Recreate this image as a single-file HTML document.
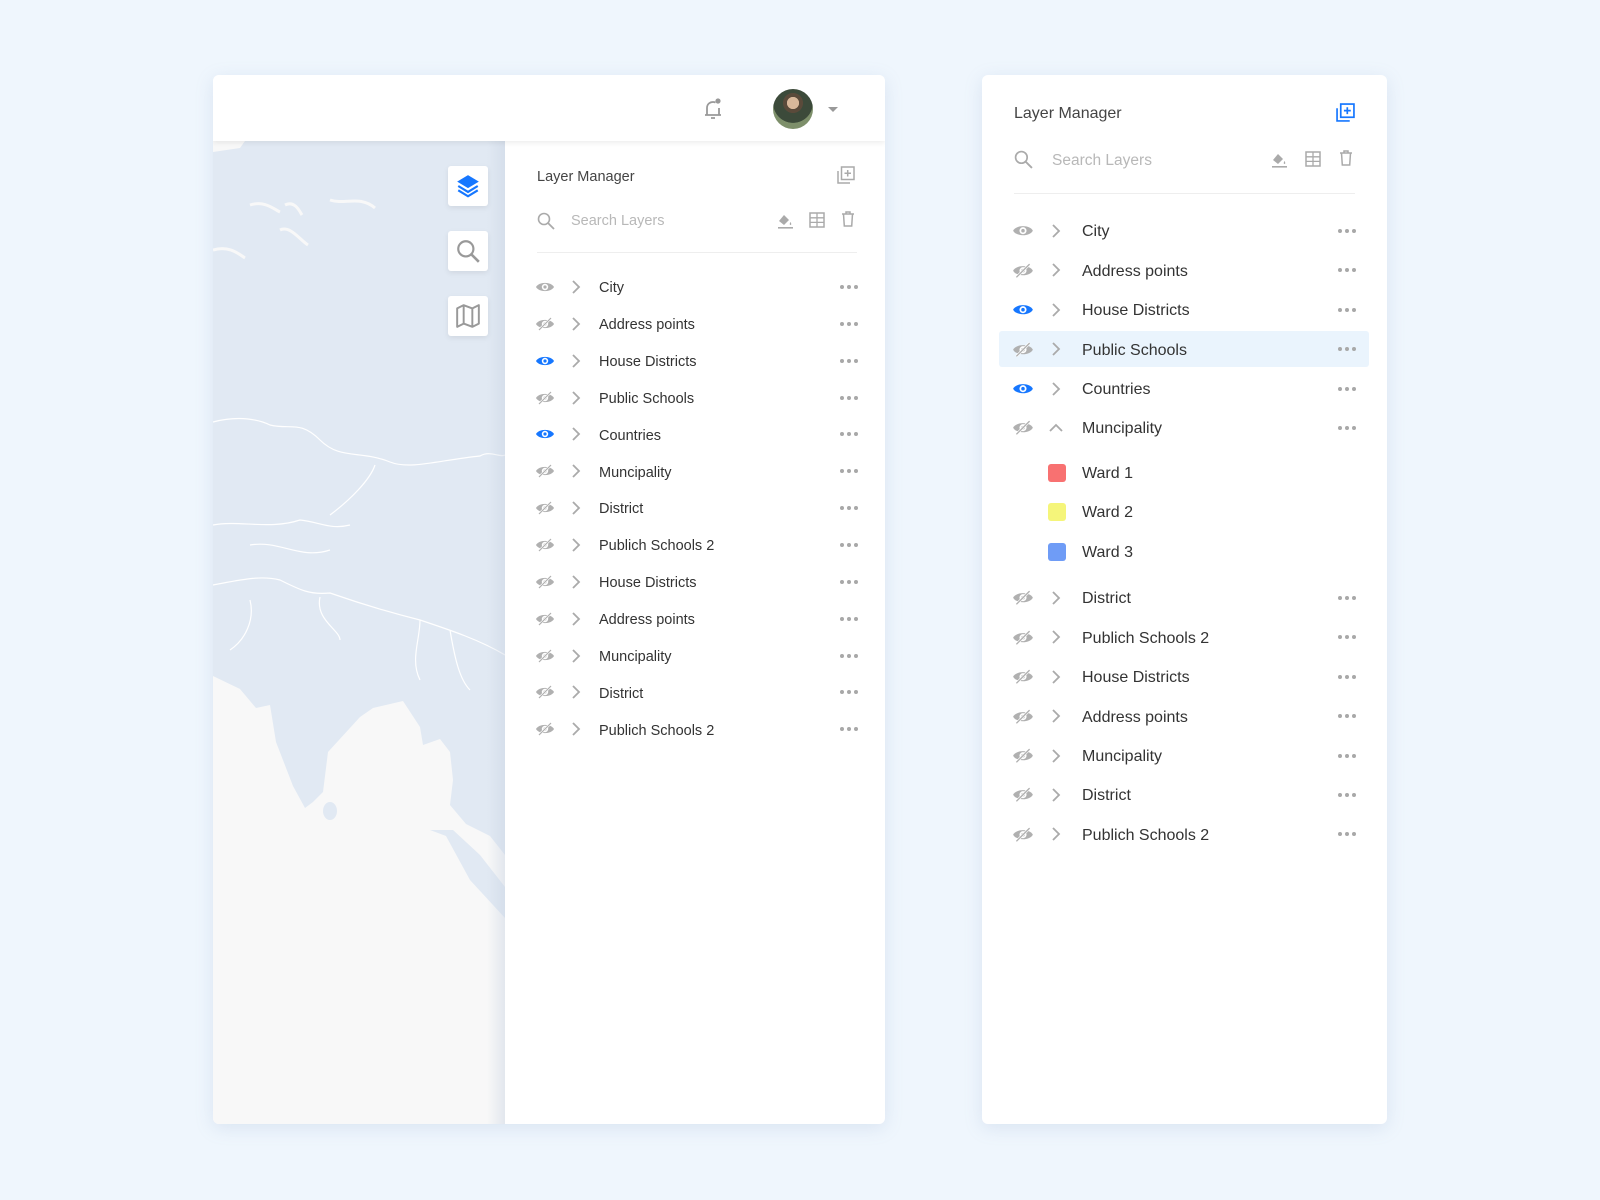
<!DOCTYPE html>
<html><head><meta charset="utf-8"><style>
*{margin:0;padding:0;box-sizing:border-box}
body{width:1600px;height:1200px;background:#eff6fd;font-family:"Liberation Sans",sans-serif;position:relative;overflow:hidden;color:#333}
.card{position:absolute;background:#fff;border-radius:6px;box-shadow:0 4px 18px rgba(120,150,190,.18);overflow:hidden}
.abs{position:absolute}
.t{position:absolute;white-space:nowrap}
.dots{position:absolute;display:flex;gap:3px}
.dots i{width:4px;height:4px;border-radius:50%;background:#a8a8a8;display:block}
.tb{position:absolute;width:40px;height:40px;background:#fff;border-radius:3px;box-shadow:0 2px 6px rgba(0,0,0,.08);display:flex;align-items:center;justify-content:center}
</style></head><body>
<svg width="0" height="0" style="position:absolute"><defs>
<symbol id="eye" viewBox="0 0 20 14"><path d="M1 7C4 1.5 16 1.5 19 7C16 12.5 4 12.5 1 7Z" fill="currentColor"/><circle cx="10" cy="7" r="3.2" fill="#fff"/><circle cx="10" cy="7" r="1.6" fill="currentColor"/></symbol>
<symbol id="eyex" viewBox="0 0 20 14"><path d="M1 7C4 1.5 16 1.5 19 7C16 12.5 4 12.5 1 7Z" fill="currentColor"/><circle cx="10" cy="7" r="3.2" fill="#fff"/><circle cx="10" cy="7" r="1.6" fill="currentColor"/><path d="M4 13L16 1" stroke="#fff" stroke-width="2.4"/><path d="M4 13L16 1" stroke="currentColor" stroke-width="1.2"/></symbol>
<symbol id="chev" viewBox="0 0 10 16"><path d="M2 2L8 8L2 14" fill="none" stroke="#aaa" stroke-width="1.8"/></symbol>
</defs></svg>

<!-- LEFT CARD -->
<div class="card" style="left:213px;top:75px;width:672px;height:1049px">
 <div class="abs" style="left:0;top:66px;width:292px;height:983px;background:#f8f8f8">
  <svg width="292" height="983" viewBox="213 141 292 983" style="position:absolute;left:0;top:0">
   <polygon fill="#e1e9f3" points="213,141 505,141 505,855 490,836 466,824 450,805 453,780 450,752 440,739 423,745 420,727 403,701 373,708 360,717 328,752 323,792 313,802 305,808 293,786 276,742 270,705 256,708 240,689 213,676"/>
   <ellipse cx="330" cy="811" rx="7" ry="9" fill="#e1e9f3"/>
   <polygon fill="#e1e9f3" points="430,830 446,836 470,880 505,918 505,887 480,855 453,830"/>
   <polygon fill="#f8f8f8" points="213,141 245,141 240,148 213,152"/>
   <path d="M213 250 C230 245 240 255 245 258 M250 205 C265 200 275 210 280 212 M280 230 C290 225 300 240 308 245 M285 205 C295 200 300 212 302 215 M330 200 C345 205 360 195 375 208" fill="none" stroke="#f8f8f8" stroke-width="3"/>
   <path d="M213 422 C240 415 260 420 270 425 C290 430 300 420 320 440 C340 460 360 450 390 462 C410 470 440 460 480 456 C490 450 500 458 505 455 M375 465 C370 480 350 500 330 515 M213 525 C240 520 270 530 300 520 C320 522 330 530 350 525 M250 545 C280 540 300 560 330 550 M213 585 C240 580 260 575 280 580 C300 590 310 595 330 593 C350 600 380 610 420 620 C450 630 480 640 505 655 M250 600 C255 620 245 640 230 650 M320 597 C315 620 340 630 340 640 M420 620 C420 640 410 660 420 680 M450 630 C455 660 460 680 470 690" fill="none" stroke="#fff" stroke-width="1.2"/>
  </svg>
  <div class="abs" style="right:0;top:0;width:18px;height:983px;background:linear-gradient(90deg,rgba(200,210,225,0),rgba(200,210,225,.45))"></div>
  <div class="tb" style="left:235px;top:25px"><svg width="26" height="26" viewBox="0 0 24 24"><path d="M12 2L22 8L12 14L2 8Z" fill="#1677ff"/><path d="M3 12L12 17.5L21 12M3 16L12 21.5L21 16" fill="none" stroke="#1677ff" stroke-width="2"/></svg></div>
  <div class="tb" style="left:235px;top:90px"><svg width="26" height="26" viewBox="0 0 24 24"><circle cx="10" cy="10" r="7" fill="none" stroke="#999" stroke-width="2"/><path d="M15 15L22 22" stroke="#999" stroke-width="2.4"/></svg></div>
  <div class="tb" style="left:235px;top:155px"><svg width="26" height="26" viewBox="0 0 24 24"><path d="M2 5L8 2L16 5L22 2V19L16 22L8 19L2 22Z M8 2V19 M16 5V22" fill="none" stroke="#999" stroke-width="1.8" stroke-linejoin="round"/></svg></div>
 </div>
 <div class="abs" style="left:0;top:0;width:672px;height:66px;background:#fff;box-shadow:0 2px 5px rgba(0,0,0,.07)"></div>
 <svg class="abs" style="left:490px;top:22px" width="22" height="24" viewBox="0 0 22 24"><path d="M4 18V11C4 7 7 5 10 5C11 5 12 5.3 12.5 5.6M16 11V18M2 18H18M8 21H12" fill="none" stroke="#999" stroke-width="1.8"/><circle cx="15" cy="4" r="2.6" fill="#999"/></svg>
 <div class="abs" style="left:560px;top:14px;width:40px;height:40px;border-radius:50%;background:radial-gradient(circle at 50% 35%,#d9b89a 0 18%,#5a4a3a 19% 30%,#3c4a3a 31% 60%,#7d8f6a 61%)"></div>
 <div class="abs" style="left:615px;top:32px;width:0;height:0;border-left:5px solid transparent;border-right:5px solid transparent;border-top:5px solid #999"></div>

 <div class="t" style="left:324px;top:94px;font-size:14.5px;color:#444">Layer Manager</div>
 <svg class="abs" style="left:624px;top:91px" width="18" height="18" viewBox="0 0 18 18"><path d="M1 5V17H13" fill="none" stroke="#aaa" stroke-width="1.5"/><rect x="4.5" y="1" width="12.5" height="12.5" fill="none" stroke="#aaa" stroke-width="1.5"/><path d="M10.7 4V10.5M7.5 7.2H14" stroke="#aaa" stroke-width="1.5"/></svg>
 <svg class="abs" style="left:324px;top:137px" width="18" height="18" viewBox="0 0 18 18"><circle cx="7" cy="7" r="5.5" fill="none" stroke="#aaa" stroke-width="1.6"/><path d="M11 11L17 17" stroke="#aaa" stroke-width="1.8"/></svg>
 <div class="t" style="left:358px;top:138px;font-size:14.5px;color:#b8b8b8">Search Layers</div>
 <svg class="abs" style="left:564px;top:137px" width="17" height="17" viewBox="0 0 17 17"><path d="M2 9L7 3L12 8L7 13Z" fill="#aaa"/><path d="M13.5 10C12.5 11.5 12.5 13 13.5 13S14.5 11.5 13.5 10Z" fill="#aaa"/><rect x="1" y="15" width="15" height="1.6" fill="#aaa"/></svg>
 <svg class="abs" style="left:596px;top:137px" width="16" height="16" viewBox="0 0 16 16"><rect x="1" y="1" width="14" height="14" fill="none" stroke="#aaa" stroke-width="1.5"/><path d="M1 5.8H15M1 10.4H15M8 1V15" stroke="#aaa" stroke-width="1.3"/></svg>
 <svg class="abs" style="left:628px;top:136px" width="14" height="16" viewBox="0 0 14 16"><path d="M1 3H13M5 3V1H9V3M2.5 3L3.3 15H10.7L11.5 3" fill="none" stroke="#aaa" stroke-width="1.5"/></svg>
 <div class="abs" style="left:324px;top:177px;width:320px;height:1px;background:#eee"></div>
 <div id="L"></div>
</div>

<!-- RIGHT CARD -->
<div class="card" style="left:982px;top:75px;width:405px;height:1049px">
 <div class="t" style="left:32px;top:30px;font-size:16px;color:#444">Layer Manager</div>
 <svg class="abs" style="left:354px;top:28px" width="19" height="19" viewBox="0 0 18 18"><path d="M1 5V17H13" fill="none" stroke="#1677ff" stroke-width="1.6"/><rect x="4.5" y="1" width="12.5" height="12.5" fill="none" stroke="#1677ff" stroke-width="1.6"/><path d="M10.7 4V10.5M7.5 7.2H14" stroke="#1677ff" stroke-width="1.6"/></svg>
 <svg class="abs" style="left:32px;top:75px" width="19" height="19" viewBox="0 0 18 18"><circle cx="7" cy="7" r="5.5" fill="none" stroke="#aaa" stroke-width="1.6"/><path d="M11 11L17 17" stroke="#aaa" stroke-width="1.8"/></svg>
 <div class="t" style="left:70px;top:77px;font-size:15.5px;color:#b8b8b8">Search Layers</div>
 <svg class="abs" style="left:289px;top:76px" width="17" height="17" viewBox="0 0 17 17"><path d="M2 9L7 3L12 8L7 13Z" fill="#aaa"/><path d="M13.5 10C12.5 11.5 12.5 13 13.5 13S14.5 11.5 13.5 10Z" fill="#aaa"/><rect x="1" y="15" width="15" height="1.6" fill="#aaa"/></svg>
 <svg class="abs" style="left:323px;top:76px" width="16" height="16" viewBox="0 0 16 16"><rect x="1" y="1" width="14" height="14" fill="none" stroke="#aaa" stroke-width="1.5"/><path d="M1 5.8H15M1 10.4H15M8 1V15" stroke="#aaa" stroke-width="1.3"/></svg>
 <svg class="abs" style="left:357px;top:75px" width="14" height="16" viewBox="0 0 14 16"><path d="M1 3H13M5 3V1H9V3M2.5 3L3.3 15H10.7L11.5 3" fill="none" stroke="#aaa" stroke-width="1.5"/></svg>
 <div class="abs" style="left:32px;top:118px;width:341px;height:1px;background:#eee"></div>
 <div class="abs" style="left:17px;top:256px;width:370px;height:36px;background:#eaf4fd;border-radius:3px"></div>
 <div id="R"></div>
</div>

<script>
function rows(id,items,o){var h='';items.forEach(function(it,i){var y=it.y!==undefined?it.y:o.y0+i*o.dy;
var vis=it.v;h+='<svg class="abs" style="left:'+o.ex+'px;top:'+(y-o.ew*0.35)+'px;color:'+(vis?'#1677ff':'#b0b0b0')+'" width="'+o.ew+'" height="'+(o.ew*0.7)+'"><use href="#'+(it.x?'eyex':'eye')+'"/></svg>';
if(it.up)h+='<svg class="abs" style="left:'+(o.cx-3)+'px;top:'+(y-5)+'px" width="16" height="10" viewBox="0 0 16 10"><path d="M2 8L8 2L14 8" fill="none" stroke="#aaa" stroke-width="1.8"/></svg>';
else h+='<svg class="abs" style="left:'+o.cx+'px;top:'+(y-8)+'px" width="10" height="16"><use href="#chev"/></svg>';
h+='<div class="t" style="left:'+o.tx+'px;top:'+(y-o.fs*0.6+o.ty)+'px;font-size:'+o.fs+'px">'+it.n+'</div>';
h+='<div class="dots" style="left:'+o.dx+'px;top:'+(y-2)+'px"><i></i><i></i><i></i></div>';});
document.getElementById(id).outerHTML=h;}
var L=[{n:'City'},{n:'Address points',x:1},{n:'House Districts',v:1},{n:'Public Schools',x:1},{n:'Countries',v:1},{n:'Muncipality',x:1},{n:'District',x:1},{n:'Publich Schools 2',x:1},{n:'House Districts',x:1},{n:'Address points',x:1},{n:'Muncipality',x:1},{n:'District',x:1},{n:'Publich Schools 2',x:1}];
rows('L',L,{y0:212,dy:36.85,ex:322,ew:20,cx:358,tx:386,dx:627,fs:14.5,ty:2});
var R=[{n:'City'},{n:'Address points',x:1},{n:'House Districts',v:1},{n:'Public Schools',x:1},{n:'Countries',v:1},{n:'Muncipality',x:1,up:1}];
R.forEach(function(r,i){r.y=156+i*39.4});
var R2=['District','Publich Schools 2','House Districts','Address points','Muncipality','District','Publich Schools 2'];
R2.forEach(function(n,i){R.push({n:n,x:1,y:523+i*39.4})});
rows('R',R,{dy:39.4,ex:30,ew:22,cx:69,tx:100,dx:356,fs:16,ty:2});
var W=[['Ward 1','#f87171'],['Ward 2','#f5f57a'],['Ward 3','#6f9cf6']];
var c=document.querySelectorAll('.card')[1];
W.forEach(function(w,i){var y=398+i*39.4;c.insertAdjacentHTML('beforeend','<div class="abs" style="left:66px;top:'+(y-9)+'px;width:18px;height:18px;border-radius:3px;background:'+w[1]+'"></div><div class="t" style="left:100px;top:'+(y-8)+'px;font-size:16px">'+w[0]+'</div>')});
</script>
</body></html>
